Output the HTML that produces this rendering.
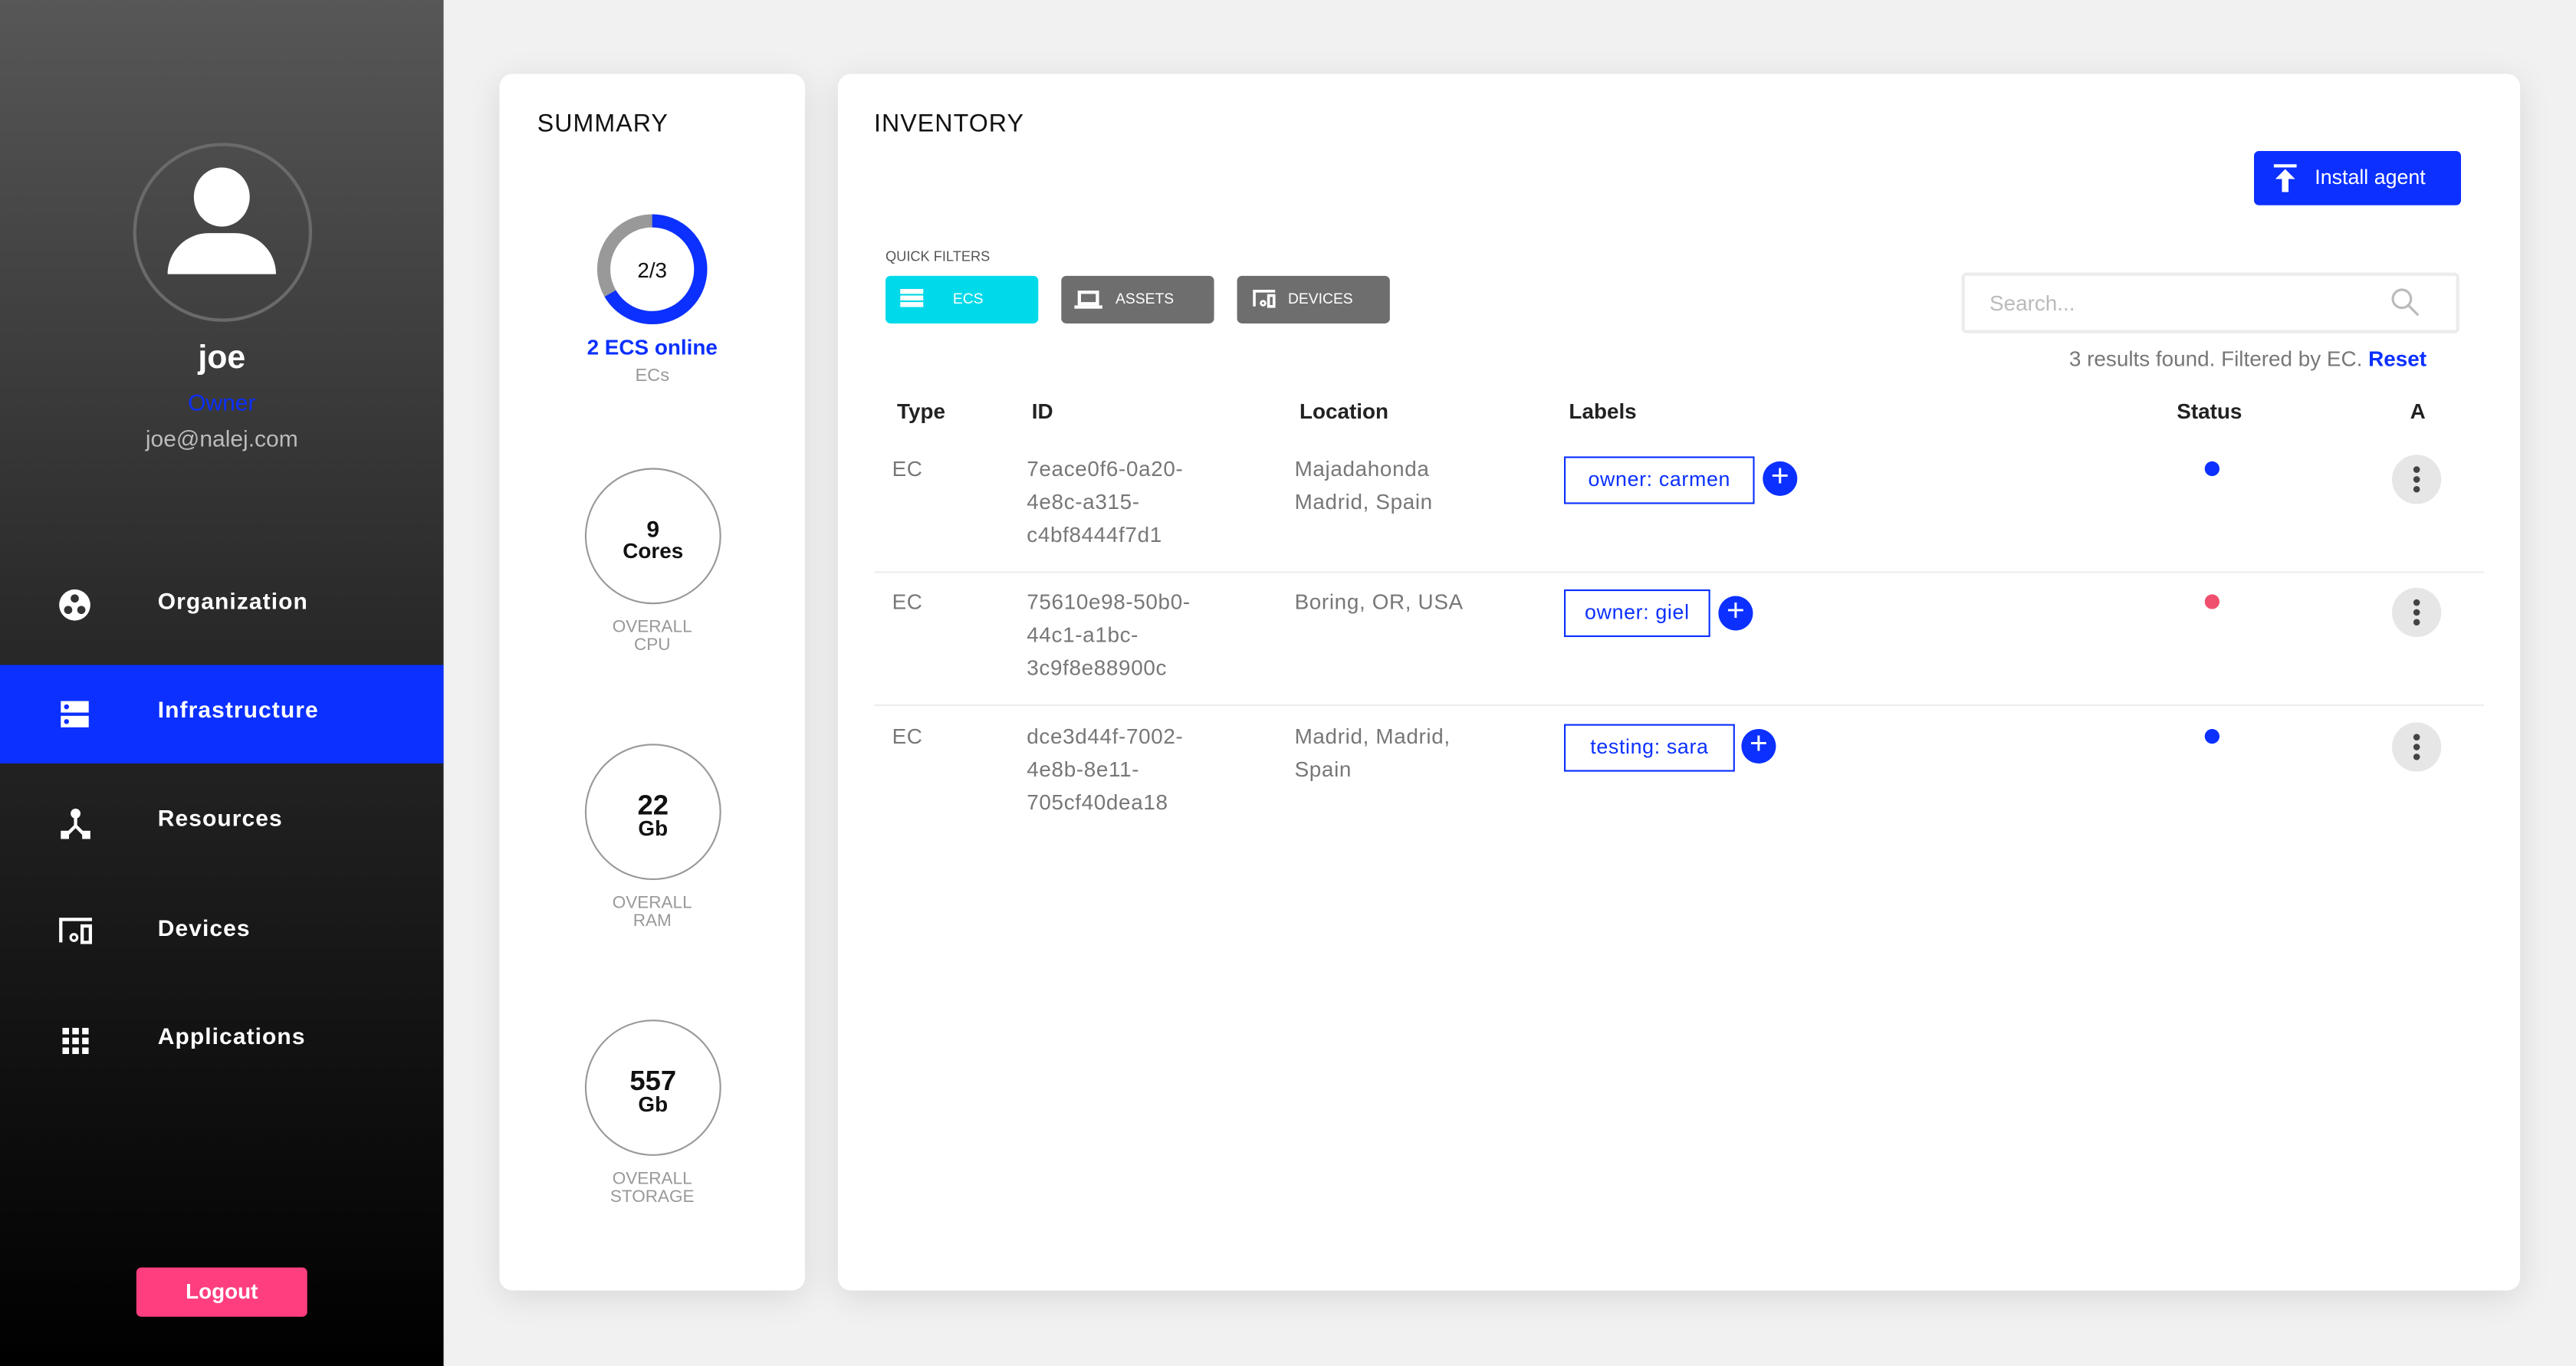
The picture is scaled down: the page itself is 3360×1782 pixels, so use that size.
<!DOCTYPE html>
<html><head><meta charset="utf-8"><style>
*{margin:0;padding:0;box-sizing:border-box}
html,body{width:3360px;height:1782px;overflow:hidden;background:#f1f1f1}
#w{position:absolute;left:0;top:0;width:1568px;height:832px;transform:scale(2.142857,2.141827);transform-origin:0 0;font-family:"Liberation Sans",sans-serif;background:#f1f1f1}
.a{position:absolute}
.sb{left:0;top:0;width:270px;height:832px;background:linear-gradient(#575757,#2a2a2a 45%,#000)}
.nav{position:absolute;left:96px;color:#fff;font-size:14px;font-weight:bold;letter-spacing:.5px}
.card{background:#fff;border-radius:8px;box-shadow:0 4px 20px rgba(0,0,0,.1)}
.c{text-align:center;position:absolute;width:186px;left:304px}
.ring{position:absolute;left:356px;width:83px;height:83px;border:1.5px solid #999;border-radius:50%;text-align:center;font-weight:bold;color:#111;line-height:13px}
.lbl{color:#999;font-size:10.5px;line-height:11px}
.t{position:absolute;font-size:13px;color:#777;line-height:20px;letter-spacing:.3px}
.h{position:absolute;top:243px;font-size:13px;color:#222;font-weight:bold}
.tag{position:absolute;height:29px;border:1.5px solid #0b30ff;color:#0b30ff;font-size:12.5px;line-height:26px;text-align:center;letter-spacing:.3px}
.plus{position:absolute;width:21px;height:21px;border-radius:50%;background:#0b30ff;color:#fff;text-align:center;line-height:20px;font-size:19px}
.dot{position:absolute;left:1342px;width:9px;height:9px;border-radius:50%;background:#0b30ff}
.act{position:absolute;left:1456px;width:30px;height:30px;border-radius:50%;background:#e6e6e6}
.act i{position:absolute;left:13px;width:4px;height:4px;background:#444;border-radius:50%}
.fb{position:absolute;top:168px;height:29px;border-radius:3px;color:#fff;font-size:9px;line-height:29px}
.sep{position:absolute;left:532px;width:980px;height:1px;background:#eee}
</style></head><body><div id="w">
<div class="a sb"></div>
<div class="a" style="left:81px;top:87px;width:109px;height:109px;border:2px solid #6a6a6a;border-radius:50%"></div>
<div class="a" style="left:118px;top:102px;width:34px;height:36px;background:#fff;border-radius:50%"></div>
<div class="a" style="left:102px;top:142px;width:66px;height:25px;background:#fff;border-radius:30px 30px 0 0"></div>
<div class="a" style="left:0;top:207px;width:270px;text-align:center;color:#fff;font-size:20px;font-weight:bold">joe</div>
<div class="a" style="left:0;top:237px;width:270px;text-align:center;color:#0b30ff;font-size:14px">Owner</div>
<div class="a" style="left:0;top:259px;width:270px;text-align:center;color:#bbb;font-size:14px">joe@nalej.com</div>
<div class="a" style="left:36px;top:359px;width:19px;height:19px;border-radius:50%;background:#fff"></div>
<div class="a" style="left:43px;top:362px;width:5px;height:5px;border-radius:50%;background:#333"></div>
<div class="a" style="left:39px;top:369px;width:5px;height:5px;border-radius:50%;background:#333"></div>
<div class="a" style="left:47px;top:369px;width:5px;height:5px;border-radius:50%;background:#333"></div>
<div class="nav" style="top:358px">Organization</div>
<div class="a" style="left:0;top:405px;width:270px;height:60px;background:#0b30ff"></div>
<div class="a" style="left:37px;top:427px;width:17px;height:7px;background:#fff"></div>
<div class="a" style="left:37px;top:436px;width:17px;height:7px;background:#fff"></div>
<div class="a" style="left:39px;top:429px;width:3px;height:3px;background:#0b30ff;border-radius:50%"></div>
<div class="a" style="left:39px;top:438px;width:3px;height:3px;background:#0b30ff;border-radius:50%"></div>
<div class="nav" style="top:424px">Infrastructure</div>
<svg class="a" style="left:36px;top:492px" width="20" height="20" viewBox="0 0 20 20"><circle cx="10" cy="3.5" r="3" fill="#fff"/><path d="M10 5v6L4 17M10 11l6 6" stroke="#fff" stroke-width="2" fill="none"/><rect x="1" y="14" width="5" height="5" fill="#fff"/><rect x="14" y="14" width="5" height="5" fill="#fff"/></svg>
<div class="nav" style="top:490px">Resources</div>
<svg class="a" style="left:35px;top:558px" width="22" height="18" viewBox="0 0 22 18"><path d="M2 16V2h19" stroke="#fff" stroke-width="2" fill="none"/><rect x="15" y="6" width="5" height="10" stroke="#fff" stroke-width="2" fill="none"/><circle cx="10" cy="13" r="2" stroke="#fff" stroke-width="1.5" fill="none"/></svg>
<div class="nav" style="top:557px">Devices</div>
<svg class="a" style="left:38px;top:626px" width="16" height="16" viewBox="0 0 16 16" fill="#fff"><rect x="0" y="0" width="4" height="4"/><rect x="6" y="0" width="4" height="4"/><rect x="12" y="0" width="4" height="4"/><rect x="0" y="6" width="4" height="4"/><rect x="6" y="6" width="4" height="4"/><rect x="12" y="6" width="4" height="4"/><rect x="0" y="12" width="4" height="4"/><rect x="6" y="12" width="4" height="4"/><rect x="12" y="12" width="4" height="4"/></svg>
<div class="nav" style="top:623px">Applications</div>
<div class="a" style="left:83px;top:772px;width:104px;height:30px;background:#ff3e7f;border-radius:3px;color:#fff;font-size:13px;font-weight:bold;text-align:center;line-height:30px">Logout</div>

<div class="a card" style="left:304px;top:45px;width:186px;height:741px"></div>
<div class="a" style="left:327px;top:67px;font-size:15px;color:#111;letter-spacing:.5px">SUMMARY</div>
<svg class="a" style="left:363px;top:130px" width="68" height="68" viewBox="0 0 68 68"><circle cx="34" cy="34" r="29.5" stroke="#999" stroke-width="8" fill="none"/><circle cx="34" cy="34" r="29.5" stroke="#0b30ff" stroke-width="8" fill="none" stroke-dasharray="123.5 62" transform="rotate(-90 34 34)"/></svg>
<div class="c" style="top:157px;font-size:13px;color:#111">2/3</div>
<div class="c" style="top:204px;font-size:13px;color:#0b30ff;font-weight:bold">2 ECS online</div>
<div class="c" style="top:223px;font-size:11px;color:#999">ECs</div>
<div class="ring" style="top:285px;padding-top:30px;font-size:14px">9<br><span style="font-size:13px">Cores</span></div>
<div class="c lbl" style="top:377px">OVERALL<br>CPU</div>
<div class="ring" style="top:453px;padding-top:30px;font-size:17px">22<br><span style="font-size:13px">Gb</span></div>
<div class="c lbl" style="top:545px">OVERALL<br>RAM</div>
<div class="ring" style="top:621px;padding-top:30px;font-size:17px">557<br><span style="font-size:13px">Gb</span></div>
<div class="c lbl" style="top:713px">OVERALL<br>STORAGE</div>

<div class="a card" style="left:510px;top:45px;width:1024px;height:741px"></div>
<div class="a" style="left:532px;top:67px;font-size:15px;color:#111;letter-spacing:.5px">INVENTORY</div>
<div class="a" style="left:1372px;top:92px;width:126px;height:33px;background:#0b30ff;border-radius:3px;color:#fff;font-size:12.5px;line-height:33px;padding-left:37px">Install agent</div>
<svg class="a" style="left:1384px;top:100px" width="14" height="17" viewBox="0 0 14 17"><rect x="0" y="0" width="14" height="2" fill="#fff"/><path d="M7 3L1 9h4v8h4V9h4z" fill="#fff"/></svg>
<div class="a" style="left:539px;top:151px;font-size:8.5px;color:#555">QUICK FILTERS</div>
<div class="fb" style="left:539px;width:93px;background:#00d9e9;padding-left:41px">ECS</div>
<div class="a" style="left:548px;top:176px;width:14px;height:3px;background:#fff;box-shadow:0 4px 0 #fff,0 8px 0 #fff"></div>
<div class="fb" style="left:646px;width:93px;background:#6e6e6e;padding-left:33px">ASSETS</div>
<div class="a" style="left:656px;top:177px;width:13px;height:9px;border:2px solid #fff"></div><div class="a" style="left:654px;top:186px;width:17px;height:2px;background:#fff"></div>
<div class="fb" style="left:753px;width:93px;background:#6e6e6e;padding-left:31px">DEVICES</div>
<svg class="a" style="left:762px;top:176px" width="15" height="12" viewBox="0 0 22 18"><path d="M2 16V2h19" stroke="#fff" stroke-width="2.5" fill="none"/><rect x="15" y="6" width="5" height="10" stroke="#fff" stroke-width="2.5" fill="none"/><circle cx="10" cy="13" r="2" stroke="#fff" stroke-width="2" fill="none"/></svg>
<div class="a" style="left:1194px;top:166px;width:303px;height:37px;border:2px solid #ececec;border-radius:3px;font-size:13px;color:#bbb;line-height:33px;padding-left:15px">Search...</div>
<svg class="a" style="left:1455px;top:175px" width="18" height="18" viewBox="0 0 18 18"><circle cx="7" cy="7" r="5.5" stroke="#bbb" stroke-width="1.5" fill="none"/><path d="M11 11l6 6" stroke="#bbb" stroke-width="1.5"/></svg>
<div class="a" style="left:1100px;top:211px;width:377px;text-align:right;font-size:13px;color:#777">3 results found. Filtered by EC. <b style="color:#0b30ff">Reset</b></div>
<div class="h" style="left:546px">Type</div><div class="h" style="left:628px">ID</div><div class="h" style="left:791px">Location</div><div class="h" style="left:955px">Labels</div><div class="h" style="left:1325px">Status</div><div class="h" style="left:1467px">A</div>

<div class="t" style="left:543px;top:276px">EC</div>
<div class="t" style="left:625px;top:276px">7eace0f6-0a20-<br>4e8c-a315-<br>c4bf8444f7d1</div>
<div class="t" style="left:788px;top:276px">Majadahonda<br>Madrid, Spain</div>
<div class="tag" style="left:952px;top:278px;width:116px">owner: carmen</div><div class="plus" style="left:1073px;top:281px">+</div>
<div class="dot" style="top:281px"></div>
<div class="act" style="top:277px"><i style="top:7px"></i><i style="top:13px"></i><i style="top:19px"></i></div>
<div class="sep" style="top:348px"></div>

<div class="t" style="left:543px;top:357px">EC</div>
<div class="t" style="left:625px;top:357px">75610e98-50b0-<br>44c1-a1bc-<br>3c9f8e88900c</div>
<div class="t" style="left:788px;top:357px">Boring, OR, USA</div>
<div class="tag" style="left:952px;top:359px;width:89px">owner: giel</div><div class="plus" style="left:1046px;top:363px">+</div>
<div class="dot" style="top:362px;background:#f0506e"></div>
<div class="act" style="top:358px"><i style="top:7px"></i><i style="top:13px"></i><i style="top:19px"></i></div>
<div class="sep" style="top:429px"></div>

<div class="t" style="left:543px;top:439px">EC</div>
<div class="t" style="left:625px;top:439px">dce3d44f-7002-<br>4e8b-8e11-<br>705cf40dea18</div>
<div class="t" style="left:788px;top:439px">Madrid, Madrid,<br>Spain</div>
<div class="tag" style="left:952px;top:441px;width:104px">testing: sara</div><div class="plus" style="left:1060px;top:444px">+</div>
<div class="dot" style="top:444px"></div>
<div class="act" style="top:440px"><i style="top:7px"></i><i style="top:13px"></i><i style="top:19px"></i></div>
</div></body></html>
